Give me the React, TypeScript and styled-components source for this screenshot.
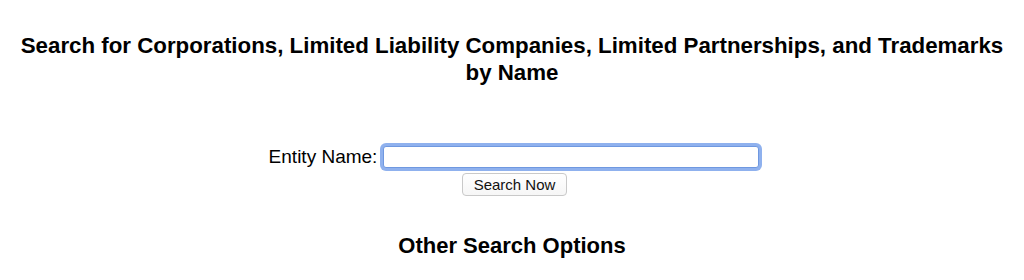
import React from "react";
import styled, { createGlobalStyle } from "styled-components";

const Global = createGlobalStyle`
  html, body { margin: 0; padding: 0; background: #ffffff; }
  body { font-family: "Liberation Sans", Arial, sans-serif; color: #000; }
`;

const Page = styled.main`
  padding: 32px 8px 0 8px;
  display: flex;
  flex-direction: column;
  align-items: center;
  text-align: center;
`;

const Heading = styled.h2`
  margin: 0;
  font-size: 22.3px;
  line-height: 27px;
  font-weight: bold;
  max-width: 1000px;
`;

const Form = styled.form`
  margin-top: 60px;
  display: flex;
  flex-direction: column;
  align-items: center;
`;

const Row = styled.div`
  display: flex;
  align-items: center;
  gap: 6px;
  padding-left: 4px;
`;

const Label = styled.label`
  font-size: 19px;
  line-height: 22px;
`;

const Input = styled.input`
  box-sizing: border-box;
  width: 376px;
  height: 22px;
  border: 1px solid #6f98e0;
  border-radius: 3px;
  box-shadow: 0 0 0 3px #8fb1ee;
  outline: none;
  padding: 0 3px;
  font-size: 16px;
  font-family: "Liberation Sans", Arial, sans-serif;
  background: #fff;
  caret-color: #000;
`;

const Button = styled.button`
  margin: 5px 0 0 5px;
  box-sizing: border-box;
  width: 105px;
  height: 23px;
  border: 1px solid #c9c9c9;
  border-radius: 4px;
  background: linear-gradient(#ffffff, #f6f6f6);
  font-family: "Liberation Sans", Arial, sans-serif;
  font-size: 15px;
  color: #111;
  padding: 0;
`;

const SubHeading = styled.h3`
  margin: 36px 0 0 0;
  font-size: 22px;
  line-height: 27px;
  font-weight: bold;
`;

export default function App() {
  return (
    <>
      <Global />
      <Page>
        <Heading>
          Search for Corporations, Limited Liability Companies, Limited Partnerships, and Trademarks by Name
        </Heading>
        <Form onSubmit={(e) => e.preventDefault()}>
          <Row>
            <Label htmlFor="entity">Entity Name:</Label>
            <Input id="entity" type="text" defaultValue="" autoFocus />
          </Row>
          <Button type="submit">Search Now</Button>
        </Form>
        <SubHeading>Other Search Options</SubHeading>
      </Page>
    </>
  );
}
